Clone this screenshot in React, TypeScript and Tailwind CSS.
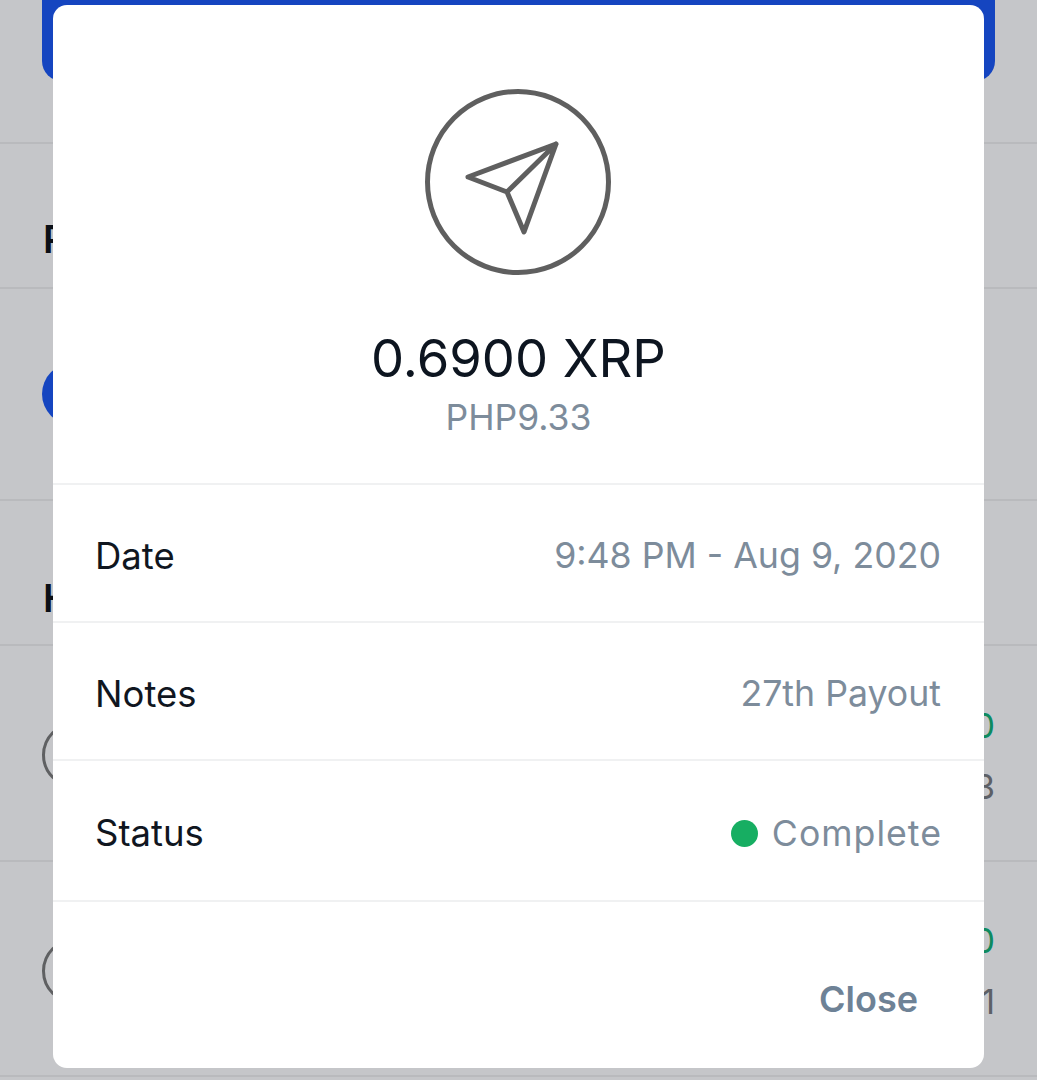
const font = "font-['Inter','Noto_Sans',sans-serif]";

function HistoryRow({ amount, fiat, height }: { amount: string; fiat: string; height: string }) {
  return (
    <div className={`flex items-center justify-between border-b-2 border-[#b9babd] px-[42px] ${height}`}>
      <div className="mt-[4px] h-[66px] w-[66px] rounded-full border-[3px] border-[#5f6062]" />
      <div className="flex flex-col items-end gap-[25px] pt-[6px] text-[34px] leading-[36px]">
        <span className="text-[#0f8a5f]">{amount}</span>
        <span className="text-[#5d6066]">{fiat}</span>
      </div>
    </div>
  );
}

function DetailRow({ label, height, children }: { label: string; height: string; children: React.ReactNode }) {
  return (
    <div className={`flex items-center justify-between border-b-2 border-[#f0f1f2] pl-[42px] pr-[43px] pt-[6px] ${height}`}>
      <span className="text-[36.5px] text-[#10161f]">{label}</span>
      <div className="flex items-center gap-[14px] text-[35.7px] text-[#7d8c9b]">{children}</div>
    </div>
  );
}

export default function App() {
  return (
    <div className={`relative h-[1080px] w-[1037px] overflow-hidden bg-[#c5c6c9] ${font}`}>
      {/* page behind the dimmer */}
      <div className="flex flex-col">
        <div className="mx-[42px] h-[81px] rounded-b-[20px] bg-[#1545c0]" />
        <div className="mt-[61px] h-[2px] bg-[#b9babd]" />
        <div className="flex h-[145px] items-end border-b-2 border-[#b9babd] px-[43px] pb-[25px]">
          <span className="text-[38px] font-semibold leading-[46px] text-[#0b0f17]">Portfolio</span>
        </div>
        <div className="flex h-[212px] items-center border-b-2 border-[#b9babd] px-[42px]">
          <div className="h-[62px] w-[62px] rounded-full bg-[#1545c0]" />
        </div>
        <div className="flex h-[145px] items-end border-b-2 border-[#b9babd] px-[43px] pb-[23px]">
          <span className="text-[38px] font-semibold leading-[46px] text-[#0b0f17]">History</span>
        </div>
        <HistoryRow amount="0.6900" fiat="PHP9.33" height="h-[216px]" />
        <HistoryRow amount="0.7000" fiat="PHP9.41" height="h-[215px]" />
      </div>

      {/* transaction modal */}
      <div className="absolute left-[53px] top-[5px] flex h-[1063px] w-[931px] flex-col rounded-[14px] bg-white">
        <div className="flex h-[480px] flex-col items-center border-b-2 border-[#f0f1f2] pt-[84px]">
          <svg className="mr-[2px]" width="186" height="186" viewBox="0 0 186 186" fill="none" stroke="#5f5f5f" strokeLinejoin="round" strokeLinecap="round">
            <circle cx="93" cy="93" r="90.5" strokeWidth="5" />
            <path d="M131 55 L43 88 L82 103 L99 143 Z M131 55 L82 103" strokeWidth="5" />
          </svg>
          <div className="mt-[51px] text-[52.5px] leading-[64px] text-[#0d1520]">0.6900 XRP</div>
          <div className="mt-[6px] text-[35.5px] leading-[44px] text-[#7d8c9b]">PHP9.33</div>
        </div>
        <DetailRow label="Date" height="h-[138px]">9:48 PM - Aug 9, 2020</DetailRow>
        <DetailRow label="Notes" height="h-[138px]">27th Payout</DetailRow>
        <DetailRow label="Status" height="h-[141px]">
          <span className="h-[27px] w-[27px] rounded-full bg-[#17ae62]" />
          <span className="-mr-[1px] tracking-[1px]">Complete</span>
        </DetailRow>
        <div className="flex flex-1 items-end justify-end px-[66px] pb-[47px]">
          <span className="text-[36px] font-semibold leading-[44px] text-[#6e8296]">Close</span>
        </div>
      </div>
    </div>
  );
}
